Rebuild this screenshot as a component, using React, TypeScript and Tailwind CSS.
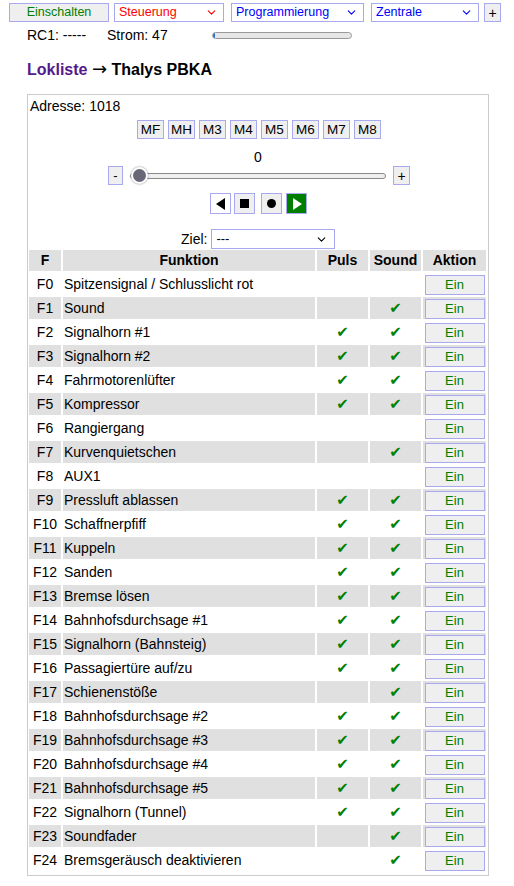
import { ChevronDown } from "lucide-react";

type Row = [string, string, boolean, boolean];

const rows: Row[] = [
  ["F0", "Spitzensignal / Schlusslicht rot", false, false],
  ["F1", "Sound", false, true],
  ["F2", "Signalhorn #1", true, true],
  ["F3", "Signalhorn #2", true, true],
  ["F4", "Fahrmotorenlüfter", true, true],
  ["F5", "Kompressor", true, true],
  ["F6", "Rangiergang", false, false],
  ["F7", "Kurvenquietschen", false, true],
  ["F8", "AUX1", false, false],
  ["F9", "Pressluft ablassen", true, true],
  ["F10", "Schaffnerpfiff", true, true],
  ["F11", "Kuppeln", true, true],
  ["F12", "Sanden", true, true],
  ["F13", "Bremse lösen", true, true],
  ["F14", "Bahnhofsdurchsage #1", true, true],
  ["F15", "Signalhorn (Bahnsteig)", true, true],
  ["F16", "Passagiertüre auf/zu", true, true],
  ["F17", "Schienenstöße", false, true],
  ["F18", "Bahnhofsdurchsage #2", true, true],
  ["F19", "Bahnhofsdurchsage #3", true, true],
  ["F20", "Bahnhofsdurchsage #4", true, true],
  ["F21", "Bahnhofsdurchsage #5", true, true],
  ["F22", "Signalhorn (Tunnel)", true, true],
  ["F23", "Soundfader", false, true],
  ["F24", "Bremsgeräusch deaktivieren", false, true],
];

const modes = ["MF", "MH", "M3", "M4", "M5", "M6", "M7", "M8"];

function Select({ label, className }: { label: string; className: string }) {
  return (
    <div
      className={`flex items-center justify-between h-[19px] border border-[#a9a9f0] bg-white pl-[4px] pr-[5px] text-[12.5px] ${className}`}
    >
      <span>{label}</span>
      <ChevronDown size={13} strokeWidth={2} />
    </div>
  );
}

function Check() {
  return <span className="text-[#008000] text-[15px] leading-none font-['DejaVu_Sans',sans-serif]">✔</span>;
}

export default function App() {
  return (
    <div className="w-[514px] min-h-[886px] bg-white text-black text-[14px] font-['Liberation_Sans',Arial,sans-serif]">
      {/* top bar */}
      <div className="flex items-center pt-[3px] pl-[9px]">
        <button className="w-[100px] h-[19px] border border-[#a9a9f0] bg-[#efefef] text-[#008000] text-[12.5px] leading-none">
          Einschalten
        </button>
        <Select label="Steuerung" className="ml-[5px] w-[110px] text-[#ff0000]" />
        <Select label="Programmierung" className="ml-[7px] w-[133px] text-[#0000ff]" />
        <Select label="Zentrale" className="ml-[7px] w-[108px] text-[#0000ff]" />
        <button className="ml-[5px] w-[17px] h-[19px] border border-[#a9a9f0] bg-[#efefef] text-[14px] leading-none">
          +
        </button>
      </div>
      <div className="flex items-center pl-[27px] mt-[5px] h-[16px]">
        <span className="w-[80px]">RC1: -----</span>
        <span className="w-[105px]">Strom: 47</span>
        <div className="w-[140px] h-[7px] rounded-full border border-[#999] bg-[#e6e6e6] overflow-hidden">
          <div className="w-[2px] h-full bg-[#2b6fd6]" />
        </div>
      </div>

      <h3 className="pl-[27px] mt-[17px] text-[16px] font-bold leading-[20px]">
        <span className="text-[#551a8b]">Lokliste</span>{" "}
        <span className="font-normal text-[18px] leading-[16px] font-['DejaVu_Sans',sans-serif]">→</span> Thalys PBKA
      </h3>

      {/* loco box */}
      <div className="ml-[27px] mt-[14px] w-[462px] border border-[#cccccc] pt-[3px] pb-[2px]">
        <div className="pl-[2px] leading-[16px]">Adresse: 1018</div>

        <div className="flex justify-center gap-[4px] mt-[6px] pl-[2px]">
          {modes.map((m) => (
            <button
              key={m}
              className="w-[27px] h-[19px] border border-[#a9a9f0] bg-[#efefef] text-[13.5px] leading-none"
            >
              {m}
            </button>
          ))}
        </div>

        <div className="text-center mt-[10px] leading-[16px]">0</div>

        <div className="flex items-center mt-[1px] h-[19px] pl-[80px]">
          <button className="w-[15px] h-[19px] border border-[#a9a9f0] bg-[#efefef] text-[13px] leading-none">
            -
          </button>
          <div className="relative ml-[7px] w-[256px] h-[19px] flex items-center">
            <div className="w-full h-[6px] rounded-full border border-[#8a8a8a] bg-[#efefef]" />
            <div className="absolute left-[1px] top-[1px] w-[17px] h-[17px] rounded-full bg-[#676777] border-2 border-white shadow-[0_0_2px_rgba(0,0,0,0.5)]" />
          </div>
          <button className="ml-[7px] w-[17px] h-[19px] border border-[#a9a9f0] bg-[#efefef] text-[14px] leading-none">
            +
          </button>
        </div>

        <div className="flex items-center mt-[8px] pl-[182px]">
          <button className="w-[21px] h-[21px] border border-[#a9a9f0] bg-white flex items-center justify-center">
            <svg width="10" height="12" viewBox="0 0 10 12">
              <polygon points="9,0 9,12 0,6" fill="#000" />
            </svg>
          </button>
          <button className="ml-[3px] w-[21px] h-[21px] border border-[#a9a9f0] bg-[#efefef] flex items-center justify-center">
            <span className="block w-[9px] h-[9px] bg-black" />
          </button>
          <button className="ml-[6px] w-[21px] h-[21px] border border-[#a9a9f0] bg-[#efefef] flex items-center justify-center">
            <span className="block w-[9px] h-[9px] rounded-full bg-black" />
          </button>
          <button className="ml-[4px] w-[21px] h-[21px] border border-[#a9a9f0] bg-[#008000] flex items-center justify-center">
            <svg width="10" height="12" viewBox="0 0 10 12">
              <polygon points="1,0 1,12 10,6" fill="#fff" />
            </svg>
          </button>
        </div>

        <div className="flex items-center mt-[15px] pl-[153px] h-[20px]">
          <span>Ziel:</span>
          <div className="ml-[4px] w-[124px] h-[20px] flex items-center justify-between border border-[#a9a9f0] bg-white pl-[4px] pr-[6px] text-[13px]">
            <span>---</span>
            <ChevronDown size={13} strokeWidth={2} />
          </div>
        </div>

        <table className="w-[461px] table-fixed border-separate border-spacing-[2px] mt-[-1px] ml-[-1px]">
          <colgroup>
            <col className="w-[32px]" />
            <col className="w-[252px]" />
            <col className="w-[51px]" />
            <col className="w-[51px]" />
            <col className="w-[63px]" />
          </colgroup>
          <thead>
            <tr className="h-[20px] bg-[#e0e0e0] font-bold">
              <th className="p-0 font-bold">F</th>
              <th className="p-0 font-bold">Funktion</th>
              <th className="p-0 font-bold">Puls</th>
              <th className="p-0 font-bold">Sound</th>
              <th className="p-0 font-bold">Aktion</th>
            </tr>
          </thead>
          <tbody>
            {rows.map(([f, name, puls, sound], i) => (
              <tr key={f} className={i % 2 === 1 ? "bg-[#e0e0e0]" : ""}>
                <td className="h-[22px] p-0 text-center">{f}</td>
                <td className="p-0 pl-[1px] whitespace-nowrap">{name}</td>
                <td className="p-0 text-center">{puls && <Check />}</td>
                <td className="p-0 text-center">{sound && <Check />}</td>
                <td className="p-0 text-center">
                  <button className="w-[60px] h-[20px] border border-[#a9a9f0] bg-[#efefef] text-[#008000] text-[13px] leading-none align-middle">
                    Ein
                  </button>
                </td>
              </tr>
            ))}
          </tbody>
        </table>
      </div>
    </div>
  );
}
